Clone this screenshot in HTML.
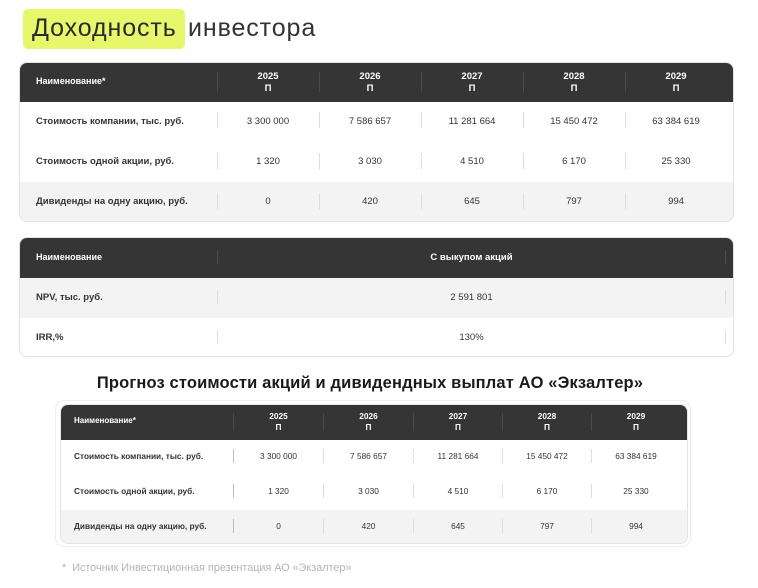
<!DOCTYPE html>
<html><head><meta charset="utf-8"><style>
*{margin:0;padding:0;box-sizing:border-box}
body{width:758px;height:588px;background:#fff;font-family:"Liberation Sans","DejaVu Sans",sans-serif;position:relative;overflow:hidden;color:#333}
.a{position:absolute}
.hl{left:23px;top:9px;width:162px;height:40px;background:#e6f76b;border-radius:5px}
.t1{top:14px;font-size:25px;color:#2a2a2a;white-space:nowrap;letter-spacing:0.9px}
.box{border:1px solid #e2e2e2;border-radius:8px;overflow:hidden;background:#fff}
.hd{background:#353535;color:#fff;font-weight:bold}
.c{position:absolute;text-align:center;font-size:9.5px}
.l{position:absolute;font-size:9.5px;font-weight:bold;color:#333}
.sep{position:absolute;width:1px;background:#ddd}
.hsep{position:absolute;width:1px;background:#4a4a4a}
.grey{background:#f3f3f3}
</style></head><body>
<div class="a hl"></div>
<div class="a t1" style="left:32px">Доходность</div>
<div class="a t1" style="left:188px;color:#333">инвестора</div>

<!-- table 1 -->
<div class="a box" style="left:19px;top:62px;width:715px;height:160px">
 <div class="a hd" style="left:0;top:0;width:715px;height:39px"></div>
 <div class="a grey" style="left:0;top:119px;width:715px;height:41px"></div>
</div>
<div class="l" style="left:36px;top:76px;color:#fff;font-size:9px">Наименование*</div>
<div class="l" style="left:36px;top:116px">Стоимость компании, тыс. руб.</div>
<div class="l" style="left:36px;top:156px">Стоимость одной акции, руб.</div>
<div class="l" style="left:36px;top:196px">Дивиденды на одну акцию, руб.</div>

<div class="hsep" style="left:217px;top:72px;height:20px"></div>
<div class="hsep" style="left:319px;top:72px;height:20px"></div>
<div class="hsep" style="left:421px;top:72px;height:20px"></div>
<div class="hsep" style="left:523px;top:72px;height:20px"></div>
<div class="hsep" style="left:625px;top:72px;height:20px"></div>
<div class="sep" style="left:217px;top:112px;height:16px"></div><div class="sep" style="left:319px;top:112px;height:16px"></div><div class="sep" style="left:421px;top:112px;height:16px"></div><div class="sep" style="left:523px;top:112px;height:16px"></div><div class="sep" style="left:625px;top:112px;height:16px"></div>
<div class="sep" style="left:217px;top:153px;height:16px"></div><div class="sep" style="left:319px;top:153px;height:16px"></div><div class="sep" style="left:421px;top:153px;height:16px"></div><div class="sep" style="left:523px;top:153px;height:16px"></div><div class="sep" style="left:625px;top:153px;height:16px"></div>
<div class="sep" style="left:217px;top:193px;height:16px"></div><div class="sep" style="left:319px;top:193px;height:16px"></div><div class="sep" style="left:421px;top:193px;height:16px"></div><div class="sep" style="left:523px;top:193px;height:16px"></div><div class="sep" style="left:625px;top:193px;height:16px"></div>

<div class="c" style="left:218px;width:100px;top:71px;color:#fff;font-weight:bold;line-height:12px">2025<br>П</div>
<div class="c" style="left:320px;width:100px;top:71px;color:#fff;font-weight:bold;line-height:12px">2026<br>П</div>
<div class="c" style="left:422px;width:100px;top:71px;color:#fff;font-weight:bold;line-height:12px">2027<br>П</div>
<div class="c" style="left:524px;width:100px;top:71px;color:#fff;font-weight:bold;line-height:12px">2028<br>П</div>
<div class="c" style="left:626px;width:100px;top:71px;color:#fff;font-weight:bold;line-height:12px">2029<br>П</div>

<div class="c" style="left:218px;width:100px;top:116px">3 300 000</div>
<div class="c" style="left:320px;width:100px;top:116px">7 586 657</div>
<div class="c" style="left:422px;width:100px;top:116px">11 281 664</div>
<div class="c" style="left:524px;width:100px;top:116px">15 450 472</div>
<div class="c" style="left:626px;width:100px;top:116px">63 384 619</div>
<div class="c" style="left:218px;width:100px;top:156px">1 320</div>
<div class="c" style="left:320px;width:100px;top:156px">3 030</div>
<div class="c" style="left:422px;width:100px;top:156px">4 510</div>
<div class="c" style="left:524px;width:100px;top:156px">6 170</div>
<div class="c" style="left:626px;width:100px;top:156px">25 330</div>
<div class="c" style="left:218px;width:100px;top:196px">0</div>
<div class="c" style="left:320px;width:100px;top:196px">420</div>
<div class="c" style="left:422px;width:100px;top:196px">645</div>
<div class="c" style="left:524px;width:100px;top:196px">797</div>
<div class="c" style="left:626px;width:100px;top:196px">994</div>

<!-- table 2 -->
<div class="a box" style="left:19px;top:237px;width:715px;height:120px">
 <div class="a hd" style="left:0;top:0;width:715px;height:40px"></div>
 <div class="a grey" style="left:0;top:40px;width:715px;height:40px"></div>
</div>
<div class="l" style="left:36px;top:252px;color:#fff;font-size:9px">Наименование</div>
<div class="l" style="left:36px;top:292px">NPV, тыс. руб.</div>
<div class="l" style="left:36px;top:332px">IRR,%</div>
<div class="hsep" style="left:217px;top:250px;height:14px"></div>
<div class="hsep" style="left:725px;top:250px;height:14px"></div>
<div class="sep" style="left:217px;top:290px;height:14px"></div><div class="sep" style="left:725px;top:290px;height:14px"></div>
<div class="sep" style="left:217px;top:330px;height:14px"></div><div class="sep" style="left:725px;top:330px;height:14px"></div>
<div class="c" style="left:218px;width:507px;top:252px;color:#fff;font-weight:bold">С выкупом акций</div>
<div class="c" style="left:218px;width:507px;top:292px">2 591 801</div>
<div class="c" style="left:218px;width:507px;top:332px">130%</div>

<div class="a" style="left:0;width:740px;top:374px;text-align:center;font-size:16.5px;font-weight:bold;color:#1a1a1a;letter-spacing:0.15px;white-space:nowrap">Прогноз стоимости акций и дивидендных выплат АО «Экзалтер»</div>

<!-- table 3 -->
<div class="a" style="left:55px;top:400px;width:636px;height:147px;border:1px solid #eee;border-radius:9px"></div>
<div class="a box" style="left:60px;top:404px;width:628px;height:140px;border-color:#e4e4e4">
 <div class="a hd" style="left:0;top:0;width:628px;height:35px"></div>
 <div class="a grey" style="left:0;top:105px;width:628px;height:35px"></div>
</div>
<div class="l" style="left:74px;top:416px;color:#fff;font-size:8px">Наименование*</div>
<div class="l" style="left:74px;top:451px;font-size:8.3px">Стоимость компании, тыс. руб.</div>
<div class="l" style="left:74px;top:486px;font-size:8.3px">Стоимость одной акции, руб.</div>
<div class="l" style="left:74px;top:521px;font-size:8.3px">Дивиденды на одну акцию, руб.</div>

<div class="hsep" style="left:233px;top:413px;height:18px"></div><div class="hsep" style="left:323px;top:413px;height:18px"></div><div class="hsep" style="left:413px;top:413px;height:18px"></div><div class="hsep" style="left:502px;top:413px;height:18px"></div><div class="hsep" style="left:591px;top:413px;height:18px"></div>
<div class="sep" style="left:233px;top:449px;height:14px;background:#bbb"></div><div class="sep" style="left:323px;top:449px;height:14px"></div><div class="sep" style="left:413px;top:449px;height:14px"></div><div class="sep" style="left:502px;top:449px;height:14px"></div><div class="sep" style="left:591px;top:449px;height:14px"></div>
<div class="sep" style="left:233px;top:484px;height:14px;background:#bbb"></div><div class="sep" style="left:323px;top:484px;height:14px"></div><div class="sep" style="left:413px;top:484px;height:14px"></div><div class="sep" style="left:502px;top:484px;height:14px"></div><div class="sep" style="left:591px;top:484px;height:14px"></div>
<div class="sep" style="left:233px;top:519px;height:14px;background:#bbb"></div><div class="sep" style="left:323px;top:519px;height:14px"></div><div class="sep" style="left:413px;top:519px;height:14px"></div><div class="sep" style="left:502px;top:519px;height:14px"></div><div class="sep" style="left:591px;top:519px;height:14px"></div>

<div class="c" style="left:234px;width:89px;top:411px;color:#fff;font-weight:bold;font-size:8.3px;line-height:11px">2025<br>П</div>
<div class="c" style="left:324px;width:89px;top:411px;color:#fff;font-weight:bold;font-size:8.3px;line-height:11px">2026<br>П</div>
<div class="c" style="left:414px;width:88px;top:411px;color:#fff;font-weight:bold;font-size:8.3px;line-height:11px">2027<br>П</div>
<div class="c" style="left:503px;width:88px;top:411px;color:#fff;font-weight:bold;font-size:8.3px;line-height:11px">2028<br>П</div>
<div class="c" style="left:592px;width:88px;top:411px;color:#fff;font-weight:bold;font-size:8.3px;line-height:11px">2029<br>П</div>

<div class="c" style="left:234px;width:89px;top:451px;font-size:8.3px">3 300 000</div>
<div class="c" style="left:324px;width:89px;top:451px;font-size:8.3px">7 586 657</div>
<div class="c" style="left:414px;width:88px;top:451px;font-size:8.3px">11 281 664</div>
<div class="c" style="left:503px;width:88px;top:451px;font-size:8.3px">15 450 472</div>
<div class="c" style="left:592px;width:88px;top:451px;font-size:8.3px">63 384 619</div>
<div class="c" style="left:234px;width:89px;top:486px;font-size:8.3px">1 320</div>
<div class="c" style="left:324px;width:89px;top:486px;font-size:8.3px">3 030</div>
<div class="c" style="left:414px;width:88px;top:486px;font-size:8.3px">4 510</div>
<div class="c" style="left:503px;width:88px;top:486px;font-size:8.3px">6 170</div>
<div class="c" style="left:592px;width:88px;top:486px;font-size:8.3px">25 330</div>
<div class="c" style="left:234px;width:89px;top:521px;font-size:8.3px">0</div>
<div class="c" style="left:324px;width:89px;top:521px;font-size:8.3px">420</div>
<div class="c" style="left:414px;width:88px;top:521px;font-size:8.3px">645</div>
<div class="c" style="left:503px;width:88px;top:521px;font-size:8.3px">797</div>
<div class="c" style="left:592px;width:88px;top:521px;font-size:8.3px">994</div>

<div class="a" style="left:62px;top:562px;font-size:10.8px;color:#b5b5b5;white-space:nowrap">*&nbsp; Источник Инвестиционная презентация АО «Экзалтер»</div>
</body></html>
